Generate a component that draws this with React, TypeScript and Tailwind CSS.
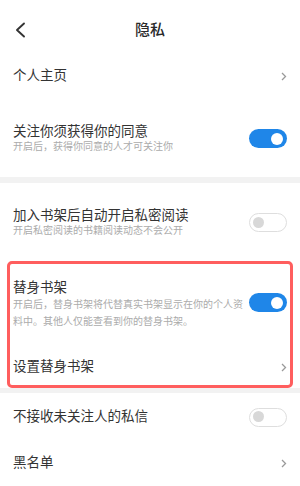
import React from "react";

const font = { fontFamily: '"Liberation Sans", "Noto Sans CJK SC", sans-serif' };

const Toggle = ({ on }: { on: boolean }) =>
  on ? (
    <div className="relative h-[19px] w-[38px] shrink-0 rounded-full bg-[#1f86e8]">
      <span className="absolute right-[4px] top-[3.5px] h-[12px] w-[12px] rounded-full bg-white" />
    </div>
  ) : (
    <div className="relative h-[19px] w-[38px] shrink-0 rounded-full border-[1.5px] border-[#dedede] bg-white">
      <span className="absolute left-[3px] top-[2.5px] h-[11px] w-[11px] rounded-full bg-[#d8d8d8]" />
    </div>
  );

const Chevron = () => (
  <svg width="6" height="9" viewBox="0 0 6 9" className="shrink-0">
    <polyline points="1,1 4.5,4.5 1,8" fill="none" stroke="#9a9a9a" strokeWidth="1.3" />
  </svg>
);

const Title = ({ children }: { children: React.ReactNode }) => (
  <div className="text-[13.5px] leading-[16px] text-[#333]">{children}</div>
);

const Sub = ({ children }: { children: React.ReactNode }) => (
  <div className="mt-[1px] text-[10px] leading-[12px] text-[#ababab]">{children}</div>
);

export default function App() {
  return (
    <div className="h-[486px] w-[300px] overflow-hidden bg-white" style={font}>
      {/* Header */}
      <div className="relative flex h-[60px] items-center justify-center">
        <svg width="12" height="16" viewBox="0 0 12 16" className="absolute left-[14px] top-[22px]">
          <polyline points="10,1.5 3,8 10,14.5" fill="none" stroke="#333" strokeWidth="1.9" strokeLinecap="round" strokeLinejoin="round" />
        </svg>
        <span className="text-[15px] font-medium text-[#2a2a2a]">隐私</span>
      </div>

      {/* Section 1 */}
      <div className="flex h-[32px] items-center justify-between px-[13px]">
        <Title>个人主页</Title>
        <Chevron />
      </div>
      <div className="flex items-center justify-between px-[13px] pt-[32px] pb-[24px]">
        <div>
          <Title>关注你须获得你的同意</Title>
          <Sub>开启后，获得你同意的人才可关注你</Sub>
        </div>
        <Toggle on />
      </div>

      <div className="h-[6px] bg-[#f2f2f2]" />

      {/* Section 2 */}
      <div className="flex items-center justify-between px-[13px] pt-[25px] pb-[24px]">
        <div>
          <Title>加入书架后自动开启私密阅读</Title>
          <Sub>开启私密阅读的书籍阅读动态不会公开</Sub>
        </div>
        <Toggle on={false} />
      </div>

      {/* Highlighted block */}
      <div className="mx-[7px] h-[127px] rounded-[5px] border-[3px] border-[#ff5e5e] px-[3px]">
        <div className="flex items-start justify-between pt-[16px]">
          <div className="w-[232px]">
            <Title>替身书架</Title>
            <div className="mt-[1px] text-[10px] leading-[16.5px] text-[#ababab]">
              开启后，替身书架将代替真实书架显示在你的个人资料中。其他人仅能查看到你的替身书架。
            </div>
          </div>
          <div className="mt-[13px]">
            <Toggle on />
          </div>
        </div>
        <div className="flex items-center justify-between pt-[29px]">
          <Title>设置替身书架</Title>
          <Chevron />
        </div>
      </div>

      <div className="h-[5px] bg-[#f2f2f2]" />

      {/* Section 3 */}
      <div className="flex h-[48px] items-center justify-between px-[13px]">
        <Title>不接收未关注人的私信</Title>
        <Toggle on={false} />
      </div>
      <div className="flex h-[44px] items-center justify-between px-[13px]">
        <Title>黑名单</Title>
        <Chevron />
      </div>
    </div>
  );
}
